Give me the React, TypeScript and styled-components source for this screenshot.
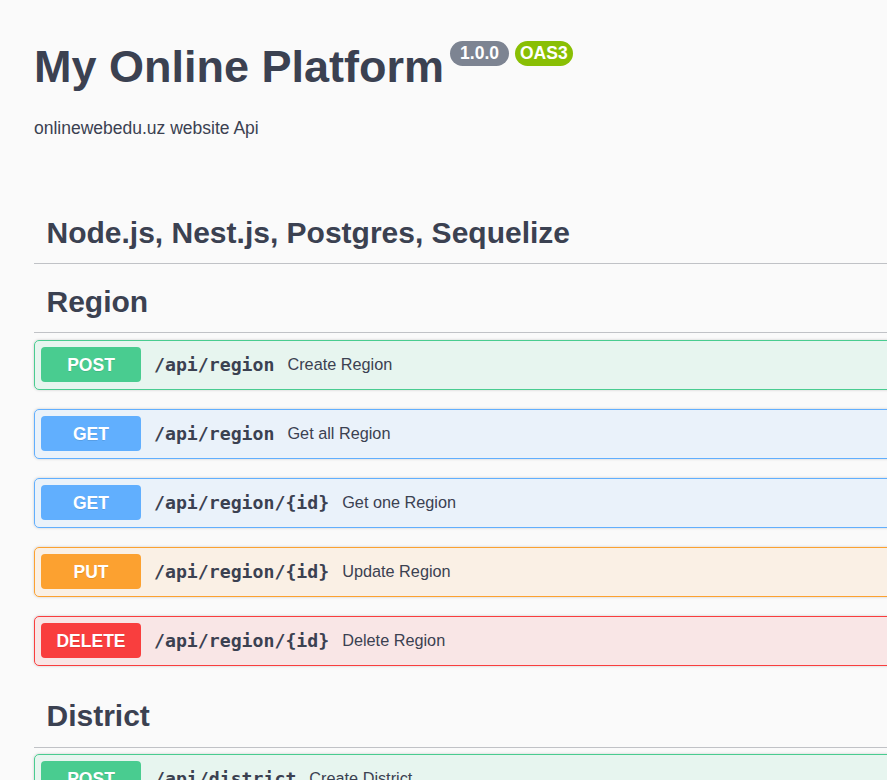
import React from "react";
import styled, { createGlobalStyle } from "styled-components";

const Global = createGlobalStyle`
  html, body { margin: 0; padding: 0; background: #fafafa; overflow: hidden; }
  body { font-family: "Liberation Sans", Arial, sans-serif; color: #3b4151; }
`;

type Method = "POST" | "GET" | "PUT" | "DELETE";

const COLORS: Record<Method, { main: string; bg: string }> = {
  POST: { main: "#49cc90", bg: "rgba(73,204,144,.1)" },
  GET: { main: "#61affe", bg: "rgba(97,175,254,.1)" },
  PUT: { main: "#fca130", bg: "rgba(252,161,48,.1)" },
  DELETE: { main: "#f93e3e", bg: "rgba(249,62,62,.1)" },
};

const Wrapper = styled.div`
  width: 1100px;
  padding: 0 0 0 34px;
  box-sizing: border-box;
`;

const Info = styled.div`
  padding-top: 40px;
  margin-bottom: 63px;
`;

const TitleRow = styled.div`
  display: flex;
  align-items: flex-start;
`;

const Title = styled.h2`
  margin: 0;
  font-size: 45px;
  line-height: 54px;
  font-weight: 700;
  color: #3b4151;
`;

const Badges = styled.div`
  display: flex;
  gap: 6px;
  margin: 1px 0 0 6px;
`;

const Badge = styled.span<{ $bg: string; $pad: number }>`
  display: inline-block;
  height: 25px;
  line-height: 25px;
  padding: 0 ${(p) => p.$pad}px;
  border-radius: 57px;
  background: ${(p) => p.$bg};
  color: #fff;
  font-size: 17.5px;
  font-weight: 700;
`;

const Description = styled.p`
  margin: 24px 0 0;
  font-size: 17.5px;
  line-height: 20px;
  color: #3b4151;
`;

const TagSection = styled.section`
  display: flex;
  flex-direction: column;
`;

const TagHeading = styled.h3`
  margin: 0 0 6.25px;
  padding: 12.5px 25px 12.5px 12.5px;
  font-size: 30px;
  line-height: 37px;
  font-weight: 700;
  color: #3b4151;
  border-bottom: 1px solid rgba(59, 65, 81, 0.3);
`;

const OpBlock = styled.div<{ $m: Method }>`
  display: flex;
  align-items: center;
  margin: 0 0 19px;
  padding: 6.5px 6px;
  border: 1px solid ${(p) => COLORS[p.$m].main};
  background: ${(p) => COLORS[p.$m].bg};
  border-radius: 5px;
  box-shadow: 0 0 3px rgba(0, 0, 0, 0.19);
`;

const MethodTag = styled.span<{ $m: Method }>`
  flex: none;
  width: 100px;
  height: 35px;
  line-height: 36px;
  text-align: center;
  border-radius: 4px;
  background: ${(p) => COLORS[p.$m].main};
  color: #fff;
  font-size: 17.5px;
  font-weight: 700;
  text-shadow: 0 1px 0 rgba(0, 0, 0, 0.1);
`;

const Path = styled.span`
  padding: 0 13px 0 13px;
  font-family: "DejaVu Sans Mono", monospace;
  font-weight: 700;
  font-size: 18.2px;
  color: #3b4151;
`;

const OpDesc = styled.span`
  font-size: 16.25px;
  color: #3b4151;
`;

type Op = { m: Method; path: string; desc: string };

const tags: { name: string; ops: Op[] }[] = [
  { name: "Node.js, Nest.js, Postgres, Sequelize", ops: [] },
  {
    name: "Region",
    ops: [
      { m: "POST", path: "/api/region", desc: "Create Region" },
      { m: "GET", path: "/api/region", desc: "Get all Region" },
      { m: "GET", path: "/api/region/{id}", desc: "Get one Region" },
      { m: "PUT", path: "/api/region/{id}", desc: "Update Region" },
      { m: "DELETE", path: "/api/region/{id}", desc: "Delete Region" },
    ],
  },
  {
    name: "District",
    ops: [
      { m: "POST", path: "/api/district", desc: "Create District" },
      { m: "GET", path: "/api/district", desc: "Get all District" },
    ],
  },
];

export default function App() {
  return (
    <>
      <Global />
      <Wrapper>
        <Info>
          <TitleRow>
            <Title>My Online Platform</Title>
            <Badges>
              <Badge $bg="#7d8492" $pad={10}>1.0.0</Badge>
              <Badge $bg="#89bf04" $pad={5}>OAS3</Badge>
            </Badges>
          </TitleRow>
          <Description>onlinewebedu.uz website Api</Description>
        </Info>
        {tags.map((t) => (
          <TagSection key={t.name}>
            <TagHeading>{t.name}</TagHeading>
            {t.ops.map((o, i) => (
              <OpBlock key={i} $m={o.m}>
                <MethodTag $m={o.m}>{o.m}</MethodTag>
                <Path>{o.path}</Path>
                <OpDesc>{o.desc}</OpDesc>
              </OpBlock>
            ))}
          </TagSection>
        ))}
      </Wrapper>
    </>
  );
}
